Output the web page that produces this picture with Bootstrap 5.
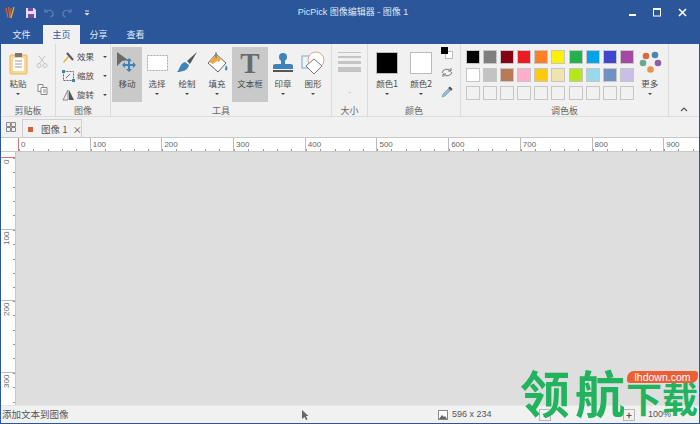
<!DOCTYPE html>
<html lang="zh-CN">
<head>
    <meta charset="UTF-8">
    <meta name="viewport" content="width=device-width, initial-scale=1.0">
    <title>PicPick 图像编辑器 - 图像 1</title>
    <link href="https://cdn.jsdelivr.net/npm/bootstrap@5.3.0/dist/css/bootstrap.min.css" rel="stylesheet">
    <style>
        html, body {
            width: 700px;
            height: 424px;
            overflow: hidden;
        }
        body {
            font-family: "Noto Sans CJK SC", "Liberation Sans", sans-serif;
            font-size: 8.5px;
            color: #4a4a4a;
            background-color: #f1f1f1;
        }
        .app-window {
            width: 700px;
            height: 424px;
            overflow: hidden;
            border-left: 1px solid #2b579a;
            border-right: 1px solid #2b579a;
            border-bottom: 1px solid #2b579a;
        }
        .title-bar {
            height: 25px;
            margin: 0 -1px;
            background-color: #2b579a;
            color: #dfe7f3;
            font-family: "Liberation Sans", "Noto Sans CJK SC", sans-serif;
            font-size: 9px;
            flex: none;
        }
        .qat {
            width: 260px;
            padding-left: 5px;
            gap: 8px;
        }
        .qat-logo { margin-right: 2px; }
        .qat-more { margin-left: 4px; }
        .title-text {
            width: 180px;
            padding-left: 6px;
            text-align: center;
            white-space: nowrap;
        }
        .win-btns {
            width: 260px;
            padding-right: 13px;
            gap: 16px;
        }
        .tab-row {
            height: 19px;
            margin: 0 -1px;
            background-color: #2b579a;
            flex: none;
        }
        .ribbon-tab {
            width: 37px;
            height: 19px;
            line-height: 19px;
            text-align: center;
            color: #e6ecf5;
            font-size: 9px;
        }
        .ribbon-tab:first-child { width: 43px; }
        .ribbon-tab.is-active {
            background-color: #f1f1f1;
            color: #2b579a;
        }
        .ribbon {
            height: 73px;
            background-color: #f1f1f1;
            border-bottom: 1px solid #dcdcdc;
            flex: none;
        }
        .rb-group {
            height: 72px;
            border-right: 1px solid #dbdbdb;
            flex: none;
        }
        .rb-body {
            height: 60px;
            padding-top: 3px;
        }
        .rb-label {
            height: 12px;
            line-height: 14px;
            text-align: center;
            color: #666;
            font-size: 9px;
        }
        .tool-btn {
            width: 30px;
            height: 55px;
            padding-top: 3px;
            text-align: center;
            flex: none;
        }
        .tool-btn.is-on { background-color: #c9c9c9; }
        .tool-btn.wide { width: 36px; }
        .tool-icon {
            height: 26px;
            display: flex;
            align-items: center;
            justify-content: center;
        }
        .tool-name {
            line-height: 12px;
            margin-top: 1px;
            white-space: nowrap;
        }
        .tool-caret {
            width: 0;
            height: 0;
            margin: 4px auto 0;
            border-left: 2px solid transparent;
            border-right: 2px solid transparent;
            border-top: 2px solid #444;
        }
        .side-row {
            height: 19px;
            padding-left: 6px;
            gap: 2px;
            white-space: nowrap;
        }
        .side-row .tool-caret { margin: 0 0 0 7px; }
        .swatch-grid {
            display: grid;
            grid-template-columns: repeat(10, 14px);
            grid-auto-rows: 14px;
            column-gap: 3.1px;
            row-gap: 4px;
            padding: 3px 0 0 5px;
            align-content: start;
        }
        .swatch { border: 1px solid #c6c6c6; }
        .swatch.empty { background-color: #f1f1f1; }
        .doc-tabs {
            height: 21px;
            background-color: #f1f1f1;
            border-bottom: 1px solid #c8c8c8;
            padding-left: 5px;
            flex: none;
        }
        .doc-tab {
            width: 60px;
            height: 19px;
            margin-left: 6px;
            margin-bottom: -1px;
            padding-left: 5px;
            align-self: flex-end;
            border: 1px solid #d0d0d0;
            border-bottom: 0;
            color: #555;
            font-size: 9.5px;
            white-space: nowrap;
        }
        .doc-mark {
            width: 5px;
            height: 5px;
            background-color: #d0613c;
            margin-right: 8px;
            flex: none;
        }
        .doc-close { margin-left: 5px; }
        .ruler-x {
            height: 14px;
            background-color: #fff;
            overflow: hidden;
            padding-left: 17px;
            border-bottom: 1px solid #c8c8c8;
            font-family: "Liberation Sans", sans-serif;
            font-size: 8px;
            color: #666;
            flex: none;
        }
        .ruler-x-cell {
            width: 71.7px;
            height: 14px;
            flex: none;
            padding-left: 2px;
            padding-top: 1px;
            line-height: 12px;
            border-left: 1px solid #bbb;
            background-image: repeating-linear-gradient(to right, #999 0, #999 1px, transparent 1px, transparent 14.34px);
            background-size: 100% 2px;
            background-position: 0 11px;
            background-repeat: no-repeat;
        }
        .ruler-x-cell.first { border-left-color: #d9727a; }
        .work-area {
            height: 253px;
            flex: none;
        }
        .ruler-y {
            width: 15px;
            flex: none;
            overflow: hidden;
            background-color: #fff;
            padding-top: 5px;
            border-right: 1px solid #c8c8c8;
            font-family: "Liberation Sans", sans-serif;
            font-size: 8px;
            color: #666;
        }
        .ruler-y-cell {
            height: 71.7px;
            border-top: 1px solid #bbb;
            background-image: repeating-linear-gradient(to bottom, #999 0, #999 1px, transparent 1px, transparent 14.34px);
            background-size: 2px 100%;
            background-position: 100% 0;
            background-repeat: no-repeat;
        }
        .ruler-y-cell.first { border-top-color: #d9727a; }
        .ruler-y-cell span {
            display: block;
            width: 11px;
            padding-bottom: 2px;
            writing-mode: vertical-rl;
            transform: rotate(180deg);
            line-height: 11px;
            height: 18px;
            text-align: right;
        }
        .canvas-area { background-color: #dedede; }
        .status-bar {
            height: 18px;
            background-color: #f1f1f1;
            border-top: 1px solid #e6e6e6;
            color: #555;
            font-size: 9.5px;
            padding-left: 1px;
            flex: none;
        }
        .status-num {
            font-family: "Liberation Sans", sans-serif;
            font-size: 9px;
        }
        .status-text { width: 300px; }
        .status-cursor { margin-right: 129px; }
        .status-img { margin-right: 4px; }
        .status-size { width: 48px; }
        .zoom-btn {
            width: 12px;
            height: 12px;
            border: 1px solid #b8b8b8;
            text-align: center;
            line-height: 9px;
            font-size: 10px;
            font-weight: bold;
        }
        .zoom-minus { margin-left: 39px; }
        .zoom-plus { margin-left: 72px; }
        .status-pct { margin-left: 13px; }
        .site-mark {
            position: absolute;
            left: 519px;
            top: 361px;
            height: 63px;
            font-family: "Noto Sans CJK SC", sans-serif;
            font-weight: 700;
            color: #22b35e;
            white-space: nowrap;
            line-height: 60px;
        }
        .site-big {
            font-size: 50px;
            letter-spacing: 5px;
        }
        .site-small {
            font-size: 36px;
            font-weight: 700;
            margin-left: -4px;
        }
        .site-pill {
            position: absolute;
            left: 626px;
            top: 371px;
            width: 71px;
            height: 12px;
            background-color: #ec5f36;
            border-radius: 7px 3px 7px 3px;
            color: #fff;
            font-family: "Liberation Sans", sans-serif;
            font-size: 10.5px;
            line-height: 12px;
            text-align: center;
        }
        #grpClip { width: 55px; }
        #grpClip .rb-body { padding-left: 2px; }
        .clip-side { width: 18px; }
        #grpImg { width: 55px; }
        #grpTool { width: 221px; }
        .tool-list { padding-left: 1px; }
        .big-t {
            font-family: "Liberation Serif", serif;
            font-size: 29px;
            font-weight: 700;
            line-height: 26px;
            color: #6a6a6a;
        }
        #grpSize { width: 36px; }
        .size-lines { padding: 5px 6px 0; }
        .size-lines i {
            display: block;
            height: 1px;
            background-color: #c4c4c4;
            margin-bottom: 3px;
        }
        .size-lines i:nth-child(2) { height: 2px; }
        .size-lines i:nth-child(3) { height: 3px; }
        .size-lines i:nth-child(4) { height: 5px; }
        .size-dash {
            text-align: center;
            color: #aaa;
            margin-top: 13px;
        }
        #grpColor { width: 93px; }
        #grpColor .rb-body { padding-left: 2px; }
        #grpColor .tool-btn { width: 34px; }
        .color-big {
            width: 22px;
            height: 22px;
            border: 1px solid #bbb;
        }
        .color-side { width: 18px; }
        #grpPal { width: 208px; }
        .more-btn { margin-left: 1px; }
    </style>
</head>
<body>
    <div class="app-window d-flex flex-column position-relative">
        <div class="title-bar d-flex align-items-center">
            <div class="qat d-flex align-items-center">
                <svg class="qat-logo" width="11" height="14" viewBox="0 0 11 14"><path d="M1 2l2 10M3.5 1l1.500 11M6 2l-.5 10" stroke="#d9602f" stroke-width="1.200" fill="none"/><path d="M9 1L6 12" stroke="#e3b23c" stroke-width="1.200"/></svg>
                <svg width="10" height="10" viewBox="0 0 10 10"><path d="M0 0h8l2 2v8H0z" fill="#e9dcf2"/><rect x="2" y="0" width="5" height="3" fill="#7b4aa8"/><rect x="2" y="6" width="6" height="4" fill="#7b4aa8"/></svg>
                <svg width="10" height="10" viewBox="0 0 10 10"><path d="M1 1v3h3M1.500 4C3 1.500 8 1.500 9 5c.4 2-1 3.500-2.500 4" stroke="#5e80b5" stroke-width="1.200" fill="none"/></svg>
                <svg width="10" height="10" viewBox="0 0 10 10"><path d="M9 1v3H6M8.500 4C7 1.500 2 1.500 1 5c-.4 2 1 3.500 2.500 4" stroke="#5e80b5" stroke-width="1.200" fill="none"/></svg>
                <svg class="qat-more" width="6" height="6" viewBox="0 0 6 6"><path d="M1 0.500h4v1H1zM0.500 3h5L3 5.500z" fill="#dfe7f3"/></svg>
            </div>
            <div class="title-text">PicPick 图像编辑器 - 图像 1</div>
            <div class="win-btns d-flex align-items-center justify-content-end">
                <svg width="9" height="9" viewBox="0 0 9 9"><rect x="1" y="6" width="7" height="2" fill="#fff"/></svg>
                <svg width="9" height="9" viewBox="0 0 9 9"><rect x="0.500" y="0.500" width="7" height="7.500" fill="none" stroke="#fff"/><rect x="0" y="0" width="8" height="2" fill="#fff"/></svg>
                <svg width="9" height="9" viewBox="0 0 9 9"><path d="M1 1l7 7M8 1L1 8" stroke="#fff" stroke-width="1.600"/></svg>
            </div>
        </div>

        <div class="tab-row d-flex">
            <div class="ribbon-tab">文件</div>
            <div class="ribbon-tab is-active">主页</div>
            <div class="ribbon-tab">分享</div>
            <div class="ribbon-tab">查看</div>
        </div>

        <div class="ribbon d-flex">
            <!-- 剪贴板 -->
            <div class="rb-group" id="grpClip">
                <div class="rb-body d-flex">
                    <div class="tool-btn">
                        <div class="tool-icon">
                            <svg width="19" height="23" viewBox="0 0 19 23"><rect x="1" y="3" width="17" height="19" rx="1" fill="#f7d79a" stroke="#eab660"/><rect x="4" y="6" width="11" height="13" fill="#fff"/><path d="M6 9h7M6 12h7M6 15h7" stroke="#9a9a9a"/><rect x="6" y="1" width="7" height="4" fill="#777"/></svg>
                        </div>
                        <div class="tool-name">粘贴</div>
                        <div class="tool-caret"></div>
                    </div>
                    <div class="d-flex flex-column align-items-center clip-side">
                        <svg class="mt-2" width="12" height="13" viewBox="0 0 12 13"><path d="M3 1l6 8M9 1L3 9" stroke="#c4c4c4" fill="none"/><circle cx="3" cy="10.500" r="2" fill="none" stroke="#c4c4c4"/><circle cx="9" cy="10.500" r="2" fill="none" stroke="#c4c4c4"/></svg>
                        <svg class="mt-3" width="11" height="11" viewBox="0 0 11 11"><path d="M1 .5h5v7H1z" fill="#fff" stroke="#888"/><path d="M4 3.500h6v7H4z" fill="#fff" stroke="#888"/><path d="M6 6h3M6 8h3" stroke="#888"/></svg>
                    </div>
                </div>
                <div class="rb-label">剪贴板</div>
            </div>
            <!-- 图像 -->
            <div class="rb-group" id="grpImg">
                <div class="rb-body d-flex flex-column">
                    <div class="side-row d-flex align-items-center">
                        <svg width="13" height="12" viewBox="0 0 13 12"><path d="M1 11L6 5l1 1-5 6z" fill="#e2ae3a"/><path d="M5 2l6 7" stroke="#555" stroke-width="2"/></svg>
                        <span>效果</span><div class="tool-caret"></div>
                    </div>
                    <div class="side-row d-flex align-items-center">
                        <svg width="13" height="12" viewBox="0 0 13 12"><rect x="1.500" y="1.500" width="10" height="9" fill="none" stroke="#666" stroke-dasharray="2 1"/><rect x="0" y="0" width="3" height="3" fill="#4a7fb5"/><rect x="10" y="9" width="3" height="3" fill="#4a7fb5"/><path d="M4 8l4-4" stroke="#777"/></svg>
                        <span>缩放</span><div class="tool-caret"></div>
                    </div>
                    <div class="side-row d-flex align-items-center">
                        <svg width="13" height="12" viewBox="0 0 13 12"><path d="M6 1v10H1z" fill="none" stroke="#888"/><path d="M7 1l5 10H7z" fill="#555"/></svg>
                        <span>旋转</span><div class="tool-caret"></div>
                    </div>
                </div>
                <div class="rb-label">图像</div>
            </div>
            <!-- 工具 -->
            <div class="rb-group" id="grpTool">
                <div class="rb-body d-flex tool-list">
                    <div class="tool-btn is-on">
                        <div class="tool-icon">
                            <svg width="26" height="26" viewBox="0 0 26 26"><path d="M3 2l11 8-6 1-5 5z" fill="#6b6b6b"/><path d="M15 8l3 3h-2v3h3v-2l3 3-3 3v-2h-3v3h2l-3 3-3-3h2v-3h-3v2l-3-3 3-3v2h3v-3h-2z" fill="#3f83b8"/></svg>
                        </div>
                        <div class="tool-name">移动</div>
                    </div>
                    <div class="tool-btn">
                        <div class="tool-icon">
                            <svg width="21" height="16" viewBox="0 0 21 16"><rect x="0.500" y="0.500" width="20" height="15" fill="#fff" stroke="#aaa" stroke-dasharray="2 1"/></svg>
                        </div>
                        <div class="tool-name">选择</div>
                        <div class="tool-caret"></div>
                    </div>
                    <div class="tool-btn">
                        <div class="tool-icon">
                            <svg width="22" height="22" viewBox="0 0 22 22"><path d="M21 0L11 9l3 3z" fill="#555"/><path d="M1 20c2-1 3-9 8-10l4 3c-1 5-6 7-12 7z" fill="#3f83b8"/></svg>
                        </div>
                        <div class="tool-name">绘制</div>
                        <div class="tool-caret"></div>
                    </div>
                    <div class="tool-btn">
                        <div class="tool-icon">
                            <svg width="23" height="24" viewBox="0 0 23 24"><path d="M10 3l10 9-8 9-10-9z" fill="#fff" stroke="#666"/><path d="M3 11l7-7 5 4-2 3-2-1-4 3z" fill="#eba94a"/><path d="M10 7V1" stroke="#666"/><path d="M20 14c1 2 2 3 1 5-1 1-2 0-2-1z" fill="#3f83b8"/></svg>
                        </div>
                        <div class="tool-name">填充</div>
                        <div class="tool-caret"></div>
                    </div>
                    <div class="tool-btn wide is-on">
                        <div class="tool-icon">
                            <span class="big-t">T</span>
                        </div>
                        <div class="tool-name">文本框</div>
                    </div>
                    <div class="tool-btn">
                        <div class="tool-icon">
                            <svg width="22" height="22" viewBox="0 0 22 22"><circle cx="11" cy="5" r="4" fill="#3f83b8"/><rect x="9" y="7" width="4" height="6" fill="#3f83b8"/><path d="M1 14c0-2 2-2 4-2h12c2 0 4 0 4 2v3H1z" fill="#3f83b8"/><rect x="1" y="18" width="20" height="2" fill="#555"/></svg>
                        </div>
                        <div class="tool-name">印章</div>
                        <div class="tool-caret"></div>
                    </div>
                    <div class="tool-btn">
                        <div class="tool-icon">
                            <svg width="24" height="24" viewBox="0 0 24 24"><rect x="1" y="5" width="13" height="12" fill="#eef3f8" stroke="#7fa6c9"/><circle cx="15" cy="9" r="8" fill="#fff" stroke="#e0a48f"/><path d="M13 8l8 7-8 8-8-8z" fill="#fff" stroke="#777"/></svg>
                        </div>
                        <div class="tool-name">图形</div>
                        <div class="tool-caret"></div>
                    </div>
                </div>
                <div class="rb-label">工具</div>
            </div>
            <!-- 大小 -->
            <div class="rb-group" id="grpSize">
                <div class="rb-body">
                    <div class="size-lines"><i></i><i></i><i></i><i></i></div>
                    <div class="size-dash">-</div>
                </div>
                <div class="rb-label">大小</div>
            </div>
            <!-- 颜色 -->
            <div class="rb-group" id="grpColor">
                <div class="rb-body d-flex">
                    <div class="tool-btn">
                        <div class="tool-icon"><div class="color-big bg-black"></div></div>
                        <div class="tool-name">颜色1</div>
                        <div class="tool-caret"></div>
                    </div>
                    <div class="tool-btn">
                        <div class="tool-icon"><div class="color-big bg-white"></div></div>
                        <div class="tool-name">颜色2</div>
                        <div class="tool-caret"></div>
                    </div>
                    <div class="d-flex flex-column align-items-center color-side">
                        <svg width="12" height="12" viewBox="0 0 12 12"><rect x="4.500" y="4.500" width="7" height="7" fill="#fff" stroke="#bbb"/><rect x="0" y="0" width="7" height="7" fill="#000"/></svg>
                        <svg class="mt-2" width="12" height="11" viewBox="0 0 12 11"><path d="M1 6a5 4.500 0 0 1 9-2M11 5a5 4.500 0 0 1-9 2" fill="none" stroke="#777"/><path d="M10 1v3H7M2 10V7h3" fill="none" stroke="#777"/></svg>
                        <svg class="mt-2" width="12" height="12" viewBox="0 0 12 12"><path d="M1 11l1-3 5-5 2 2-5 5z" fill="#8fc0df" stroke="#6a94ad" stroke-width=".6"/><path d="M7 2l2-1.500 2.500 2.500L10 5z" fill="#555"/></svg>
                    </div>
                </div>
                <div class="rb-label">颜色</div>
            </div>
            <!-- 调色板 -->
            <div class="rb-group" id="grpPal">
                <div class="rb-body d-flex">
                    <div class="swatch-grid" id="swatchGrid"></div>
                    <div class="tool-btn more-btn">
                        <div class="tool-icon">
                            <svg width="24" height="24" viewBox="0 0 24 24"><circle cx="8" cy="5" r="3.300" fill="#d96a3f"/><circle cx="17" cy="4" r="3.300" fill="#4a87b0"/><circle cx="5" cy="12" r="3.300" fill="#6aa88f"/><circle cx="20" cy="12" r="3.300" fill="#8b5fa8"/><circle cx="12.500" cy="18.500" r="3.300" fill="#e8924a"/></svg>
                        </div>
                        <div class="tool-name">更多</div>
                        <div class="tool-caret"></div>
                    </div>
                </div>
                <div class="rb-label">调色板</div>
            </div>
            <div class="flex-grow-1 d-flex align-items-end justify-content-center pb-1">
                <svg width="8" height="5" viewBox="0 0 8 5"><path d="M1 4l3-3 3 3" fill="none" stroke="#555" stroke-width="1.200"/></svg>
            </div>
        </div>

        <div class="doc-tabs d-flex align-items-center">
            <svg width="10" height="10" viewBox="0 0 10 10"><path d="M.5.500h4v4h-4zM5.500.500h4v4h-4zM.5 5.500h4v4h-4zM5.500 5.500h4v4h-4z" fill="none" stroke="#888"/></svg>
            <div class="doc-tab d-flex align-items-center">
                <span class="doc-mark"></span>
                <span>图像 1</span>
                <span class="doc-close">×</span>
            </div>
        </div>

        <div class="ruler-x d-flex" id="rulerX"></div>

        <div class="work-area d-flex">
            <div class="ruler-y" id="rulerY"></div>
            <div class="canvas-area flex-grow-1"></div>
        </div>

        <div class="status-bar d-flex align-items-center">
            <span class="status-text">添加文本到图像</span>
            <svg class="status-cursor" width="7" height="10" viewBox="0 0 7 10"><path d="M0 0l6.500 6H4l1.500 3.500-1.500.5L2.500 7 0 9z" fill="#666"/></svg>
            <svg class="status-img" width="10" height="10" viewBox="0 0 10 10"><rect x=".5" y=".5" width="9" height="9" fill="#fff" stroke="#888"/><path d="M1 9l3-4 2 2 1-1 2 3z" fill="#666"/></svg>
            <span class="status-num status-size">596 x 234</span>
            <span class="zoom-btn zoom-minus">-</span>
            <span class="zoom-btn zoom-plus">+</span>
            <span class="status-num status-pct">100%</span>
        </div>

        <div class="site-mark"><span class="site-big">领航</span><span class="site-small">下载</span></div>
        <div class="site-pill">lhdown.com</div>
    </div>

    <script src="https://cdn.jsdelivr.net/npm/bootstrap@5.3.0/dist/js/bootstrap.bundle.min.js"></script>
    <script>
        const paletteColors = [
            '#000000', '#7f7f7f', '#880015', '#ed1c24', '#ff7f27', '#fff200', '#22b14c', '#00a2e8', '#3f48cc', '#a349a4',
            '#ffffff', '#c3c3c3', '#b97a57', '#ffaec9', '#ffc90e', '#efe4b0', '#b5e61d', '#99d9ea', '#7092be', '#c8bfe7'
        ];

        const grid = document.getElementById('swatchGrid');
        for (let i = 0; i < 30; i++) {
            const cell = document.createElement('div');
            cell.className = 'swatch';
            if (paletteColors[i]) {
                cell.style.backgroundColor = paletteColors[i];
            } else {
                cell.classList.add('empty');
            }
            grid.appendChild(cell);
        }

        const rulerX = document.getElementById('rulerX');
        for (let n = 0; n <= 900; n += 100) {
            const cell = document.createElement('div');
            cell.className = n === 0 ? 'ruler-x-cell first' : 'ruler-x-cell';
            cell.textContent = n;
            rulerX.appendChild(cell);
        }

        const rulerY = document.getElementById('rulerY');
        for (let n = 0; n <= 300; n += 100) {
            const cell = document.createElement('div');
            cell.className = n === 0 ? 'ruler-y-cell first' : 'ruler-y-cell';
            const label = document.createElement('span');
            label.textContent = n;
            cell.appendChild(label);
            rulerY.appendChild(cell);
        }
    </script>
</body>
</html>
